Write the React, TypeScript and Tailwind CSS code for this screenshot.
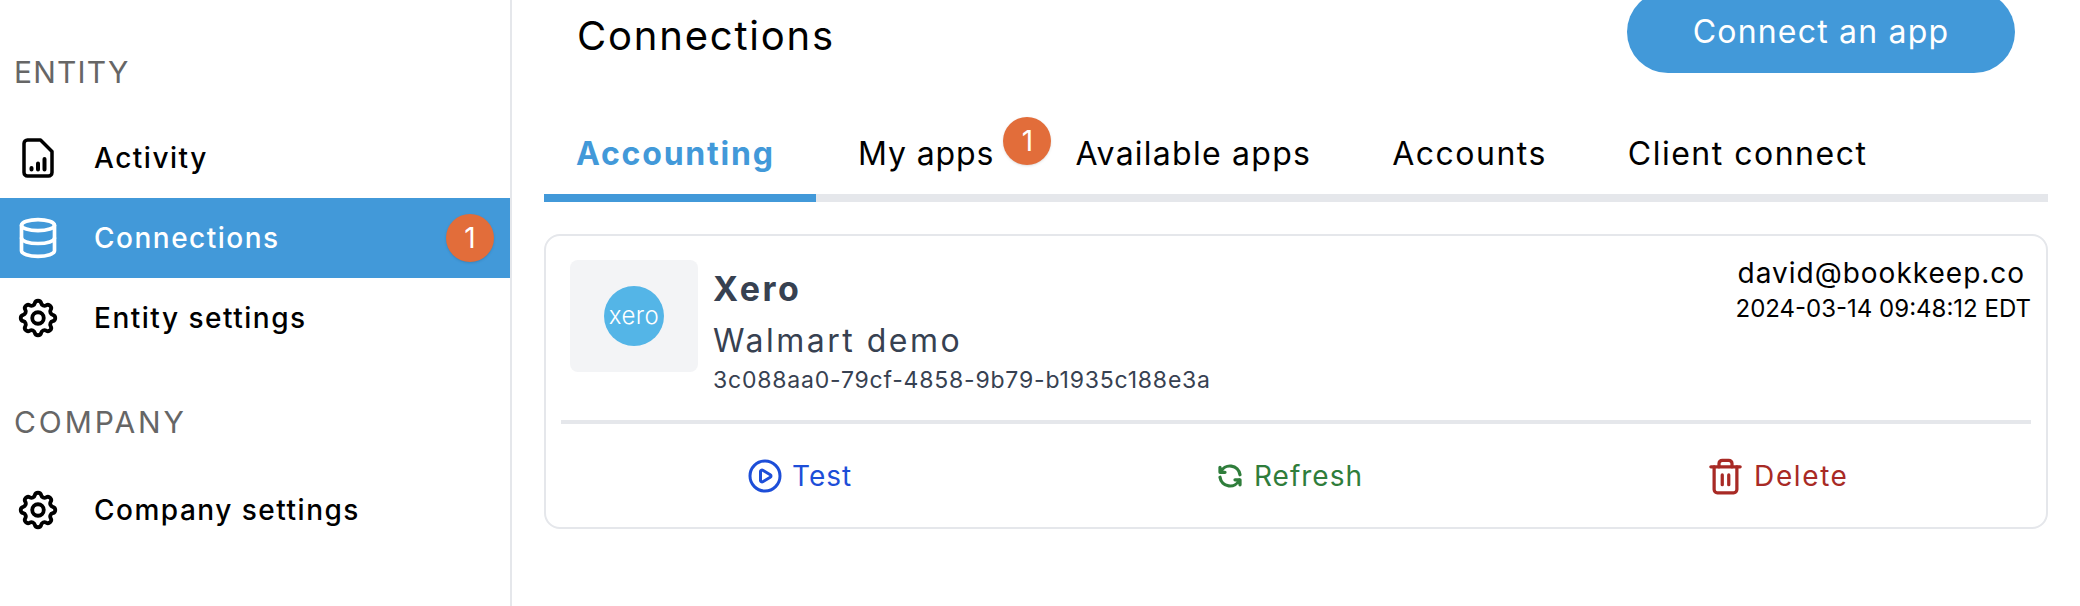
import React from 'react';
import { CirclePlay, Database, Trash2 } from 'lucide-react';
import { TbSettings, TbRefresh } from 'react-icons/tb';

const ActivityIcon = () => (
  <svg viewBox="0 0 32 40" className="w-8 h-10" fill="none" stroke="currentColor" strokeWidth="3.5" strokeLinejoin="round" strokeLinecap="round">
    <path d="M5.500 2h13l11.500 11.500v21a3.500 3.500 0 0 1-3.500 3.500h-21A3.500 3.500 0 0 1 2 34.500v-29A3.500 3.500 0 0 1 5.500 2z" />
    <path d="M9.500 31.500v-1.500M16 31.500v-6M22.500 31.500V21" strokeWidth="4" />
  </svg>
);

const XeroLogo = () => (
  <div className="w-[60px] h-[60px] rounded-full bg-[#54b5e7] flex items-center justify-center text-white text-[24px] font-light leading-none tracking-[0.5px]">
    xero
  </div>
);

const Badge = ({ className = '' }: { className?: string }) => (
  <span className={`w-12 h-12 shrink-0 rounded-full bg-[#e26d3a] text-white flex items-center justify-center text-[28px] shadow ${className}`}>
    1
  </span>
);

const NavItem = ({ icon, label, active, badge }: { icon: React.ReactNode; label: string; active?: boolean; badge?: boolean }) => (
  <div className={`h-20 flex items-center pl-[19px] pr-4 ${active ? 'bg-[#4299d9] text-white' : 'text-black'}`}>
    <div className="w-[38px] flex justify-center">{icon}</div>
    <span className="ml-[37px] text-[28px] font-medium tracking-[1.5px]">{label}</span>
    {badge && <Badge className="ml-auto" />}
  </div>
);

const Tab = ({ label, className }: { label: string; className: string }) => (
  <div className={`text-[32px] text-black whitespace-nowrap ${className}`}>{label}</div>
);

export default function App() {
  return (
    <div className="flex h-[606px] overflow-hidden bg-white" style={{ fontFamily: 'Inter, "Noto Sans", sans-serif' }}>
      <aside className="w-[512px] shrink-0 border-r-2 border-[#e5e7eb]">
        <h2 className="pl-[14px] pt-[50px] h-[118px] text-[30px] tracking-[1.2px] text-[#666]">ENTITY</h2>
        <NavItem icon={<ActivityIcon />} label="Activity" />
        <NavItem icon={<Database size={44} className="shrink-0" />} label="Connections" active badge />
        <NavItem icon={<TbSettings size={46} className="shrink-0" />} label="Entity settings" />
        <h2 className="pl-[14px] pt-[42px] h-[112px] text-[30px] tracking-[2.900px] text-[#666]">COMPANY</h2>
        <NavItem icon={<TbSettings size={46} className="shrink-0" />} label="Company settings" />
      </aside>
      <main className="flex-1 pl-8 pr-8 -mt-[9px]">
        <div className="flex items-start justify-between pl-[33px]">
          <h1 className="pt-[15px] text-[40px] tracking-[1.8px] text-black">Connections</h1>
          <button className="w-[388px] h-[82px] mr-[33px] rounded-full bg-[#4299d9] text-white text-[32px] tracking-[1.2px]">Connect an app</button>
        </div>
        <div className="mt-[47px] flex items-center h-[82px] pb-[7px] border-b-8 border-[#e5e7eb]">
          <div className="w-[272px] -mb-[15px] h-[82px] pb-[7px] border-b-8 border-[#4299d9] pl-8 flex items-center text-[32px] font-bold tracking-[1.8px] text-[#4299d9]">Accounting</div>
          <Tab label="My apps" className="ml-[42px] tracking-[0.9px]" />
          <Badge className="ml-[9px] -mt-[26px]" />
          <Tab label="Available apps" className="ml-[24px] tracking-[1.25px]" />
          <Tab label="Accounts" className="ml-[81px] tracking-[1.5px]" />
          <Tab label="Client connect" className="ml-[81px] tracking-[1.5px]" />
        </div>
        <section className="mt-8 h-[295px] rounded-2xl border-2 border-[#e5e7eb] px-[15px]">
          <div className="flex pt-6 h-[184px]">
            <div className="ml-[9px] w-32 h-28 rounded-lg bg-[#f3f4f6] flex items-center justify-center"><XeroLogo /></div>
            <div className="ml-[15px] mt-1 flex-1 text-[#374151]">
              <div className="text-[34px] font-bold leading-[50px] tracking-[2.500px]">Xero</div>
              <div className="text-[32px] leading-[54px] tracking-[2.500px]">Walmart demo</div>
              <div className="text-[23px] leading-[24px] tracking-[0.8px]">3c088aa0-79cf-4858-9b79-b1935c188e3a</div>
            </div>
            <div className="-mt-[5px] text-black">
              <div className="ml-[2px] text-[28px] leading-[36px] tracking-[1px]">david@bookkeep.co</div>
              <div className="text-[24px] leading-[36px]">2024-03-14 09:48:12 EDT</div>
            </div>
          </div>
          <div className="h-1 bg-[#e5e7eb]" />
          <div className="grid grid-cols-3 h-[104px] pr-[14px] text-[28px] tracking-[1px]">
            <div className="flex items-center justify-center gap-[9px] pr-2 text-[#1d4ed8]"><CirclePlay size={36} className="shrink-0" />Test</div>
            <div className="flex items-center justify-center gap-[9px] text-[#2f7d3b]"><TbRefresh size={30} strokeWidth={2.600} className="shrink-0" />Refresh</div>
            <div className="flex items-center justify-center gap-[9px] pl-[6px] tracking-[1.6px] text-[#a82a25]"><Trash2 size={39} strokeWidth={2} className="shrink-0" />Delete</div>
          </div>
        </section>
      </main>
    </div>
  );
}
